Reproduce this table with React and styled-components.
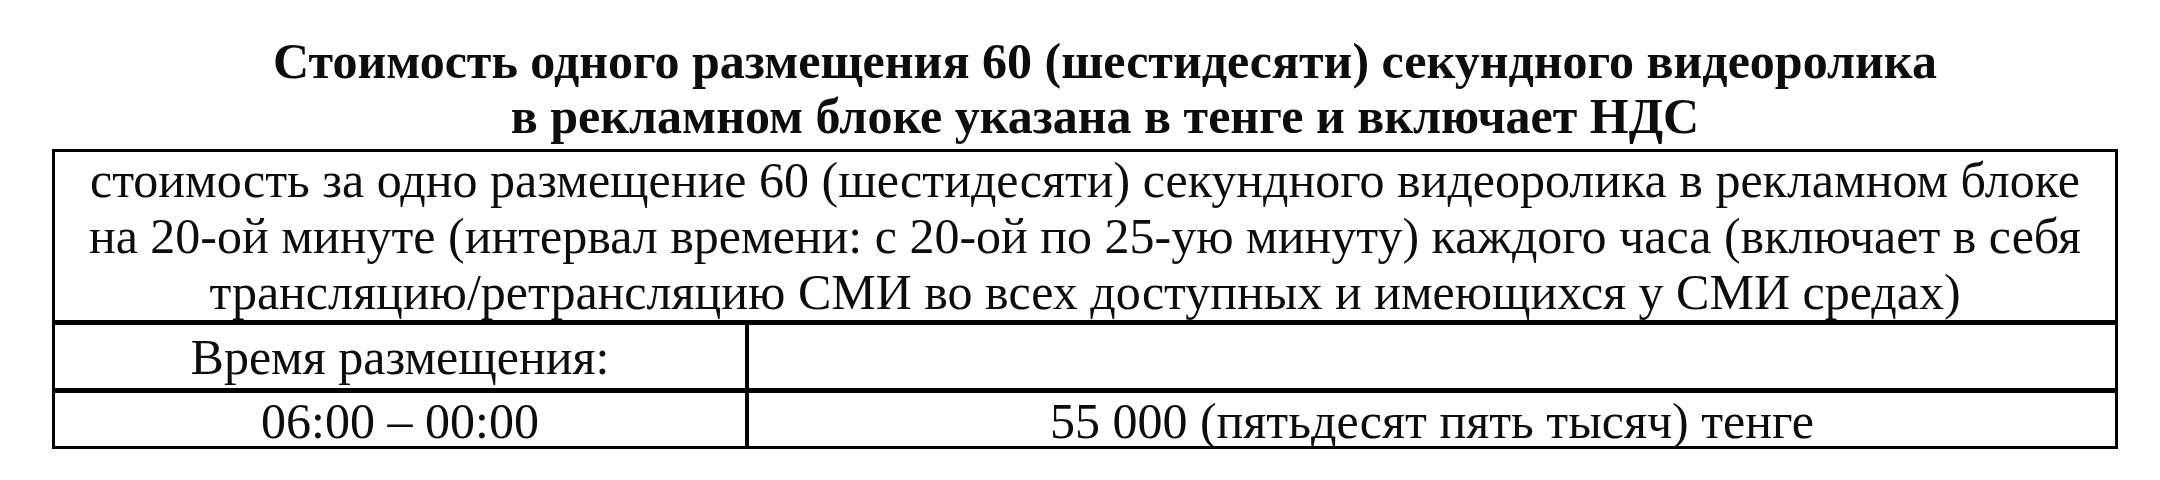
import styled, { createGlobalStyle } from 'styled-components';

const GlobalStyle = createGlobalStyle`
  html, body {
    margin: 0;
    padding: 0;
    background: #fff;
  }
  body {
    font-family: "Liberation Serif", "Times New Roman", serif;
    color: #0d0d0d;
  }
`;

const Page = styled.div`
  width: 2160px;
  height: 480px;
  padding: 34px 0 0 52px;
  box-sizing: border-box;
`;

const Title = styled.h1`
  width: 2066px;
  margin: 0 0 5px;
  padding-left: 40px;
  box-sizing: border-box;
  text-align: center;
  font-family: "Liberation Serif", "Times New Roman", serif;
  font-size: 50px;
  line-height: 55px;
  font-weight: 700;
`;

const Table = styled.div`
  width: 2066px;
  border: 3px solid #000;
  box-sizing: border-box;
`;

const Row = styled.div`
  display: grid;
  grid-template-columns: ${(p) => (p.$split ? '690px 1fr' : '1fr')};
  height: ${(p) => p.$height}px;
  padding-bottom: ${(p) => p.$lift || 0}px;
  box-sizing: content-box;
  border-top: ${(p) => (p.$first ? 'none' : '5px solid #000')};
`;

const Cell = styled.div`
  display: flex;
  align-items: center;
  justify-content: center;
  text-align: center;
  font-family: "Liberation Serif", "Times New Roman", serif;
  font-size: 50px;
  line-height: 56px;
  white-space: nowrap;
  border-left: ${(p) => (p.$divider ? '4px solid #000' : 'none')};
`;

const rows = [
  { left: 'Время размещения:', right: '', height: 63, lift: 0 },
  { left: '06:00 – 00:00', right: '55 000 (пятьдесят пять тысяч) тенге', height: 50, lift: 3 },
];

export default function App() {
  return (
    <Page>
      <GlobalStyle />
      <Title>
        Стоимость одного размещения 60 (шестидесяти) секундного видеоролика
        <br />
        в рекламном блоке указана в тенге и включает НДС
      </Title>
      <Table>
        <Row $first $height={162} $lift={6}>
          <Cell>
            стоимость за одно размещение 60 (шестидесяти) секундного видеоролика в рекламном блоке
            <br />
            на 20-ой минуте (интервал времени: с 20-ой по 25-ую минуту) каждого часа (включает в себя
            <br />
            трансляцию/ретрансляцию СМИ во всех доступных и имеющихся у СМИ средах)
          </Cell>
        </Row>
        {rows.map((r) => (
          <Row key={r.left} $split $height={r.height} $lift={r.lift}>
            <Cell>{r.left}</Cell>
            <Cell $divider>{r.right}</Cell>
          </Row>
        ))}
      </Table>
    </Page>
  );
}
